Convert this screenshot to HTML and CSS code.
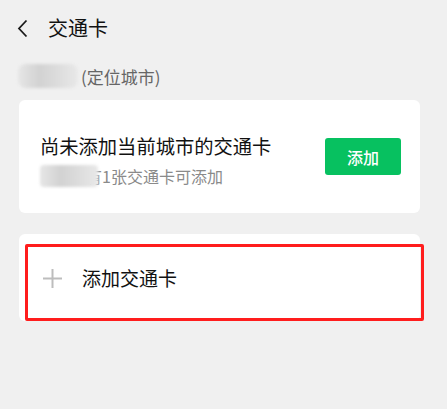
FILE: index.html
```html
<!DOCTYPE html>
<html lang="zh-CN">
<head>
    <meta charset="UTF-8">
    <meta name="viewport" content="width=device-width, initial-scale=1.0">
    <title>交通卡</title>
    <link rel="stylesheet" href="styles.css">
</head>
<body>
    <header class="top-bar">
        <svg class="back" width="11" height="19" viewBox="0 0 11 19">
            <path d="M9.5 1.5 L2 9.5 L9.5 17.5" fill="none" stroke="#1a1a1a" stroke-width="1.8"/>
        </svg>
        <span class="page-title">交通卡</span>
    </header>

    <div class="location">
        <span class="blur blur-city"></span>
        <span class="location-text">(定位城市)</span>
    </div>

    <section class="card card-tip">
        <div class="tip-text">
            <div class="tip-title">尚未添加当前城市的交通卡</div>
            <div class="tip-sub"><span class="blur blur-sub"></span>有1张交通卡可添加</div>
        </div>
        <button class="btn-add">添加</button>
    </section>

    <section class="card card-add">
        <svg class="plus" width="19" height="19" viewBox="0 0 19 19">
            <path d="M9.5 0 V19 M0 9.5 H19" stroke="#bdbdbd" stroke-width="2"/>
        </svg>
        <span class="add-text">添加交通卡</span>
        <div class="mark"></div>
    </section>
</body>
</html>
```

FILE: styles.css
```css
body {
    margin: 0;
    padding: 0;
    background: #f0f0f0;
    font-family: "Noto Sans CJK SC", "Noto Sans", sans-serif;
    color: #111;
}
.top-bar {
    display: flex;
    align-items: center;
    height: 52px;
    padding-left: 17px;
    padding-top: 2px;
}
.page-title {
    margin-left: 20px;
    font-size: 20px;
    line-height: 26px;
}
.location {
    display: flex;
    align-items: center;
    height: 44px;
    padding-left: 18px;
}
.blur {
    display: inline-block;
    background: linear-gradient(90deg, #e6e6e6 0%, #d2d2d2 35%, #dadada 60%, #e8e8e8 100%);
    filter: blur(1.5px);
    border-radius: 8px;
}
.blur-city {
    width: 60px;
    height: 24px;
}
.location-text {
    margin-left: 3px;
    font-size: 17px;
    color: #666;
}
.card {
    background: #fff;
    border-radius: 6px;
    margin: 0 27px 0 19px;
    box-sizing: border-box;
}
.card-tip {
    display: flex;
    align-items: center;
    justify-content: space-between;
    height: 113px;
    margin-top: 2px;
    padding: 0 19px 0 21px;
}
.tip-text {
    padding-top: 7px;
}
.tip-title {
    font-size: 19.3px;
    line-height: 26px;
}
.tip-sub {
    display: flex;
    align-items: center;
    margin-top: 6px;
    font-size: 16px;
    line-height: 22px;
    color: #8a8a8a;
}
.blur-sub {
    position: relative;
    z-index: 1;
    width: 58px;
    height: 22px;
    margin-right: -12px;
    border-radius: 4px;
}
.btn-add {
    width: 76px;
    height: 37px;
    border: none;
    border-radius: 3px;
    background: #07c160;
    color: #fff;
    font-family: inherit;
    font-size: 16px;
    font-weight: 500;
}
.card-add {
    position: relative;
    display: flex;
    align-items: center;
    height: 87px;
    margin-top: 21px;
    padding: 1px 0 0 24px;
}
.add-text {
    margin-left: 20px;
    font-size: 19px;
    line-height: 26px;
}
.mark {
    position: absolute;
    left: 6px;
    top: 10px;
    width: 399px;
    height: 77px;
    box-sizing: border-box;
    border: 3px solid #ff1d1d;
    border-radius: 2px;
}
```
